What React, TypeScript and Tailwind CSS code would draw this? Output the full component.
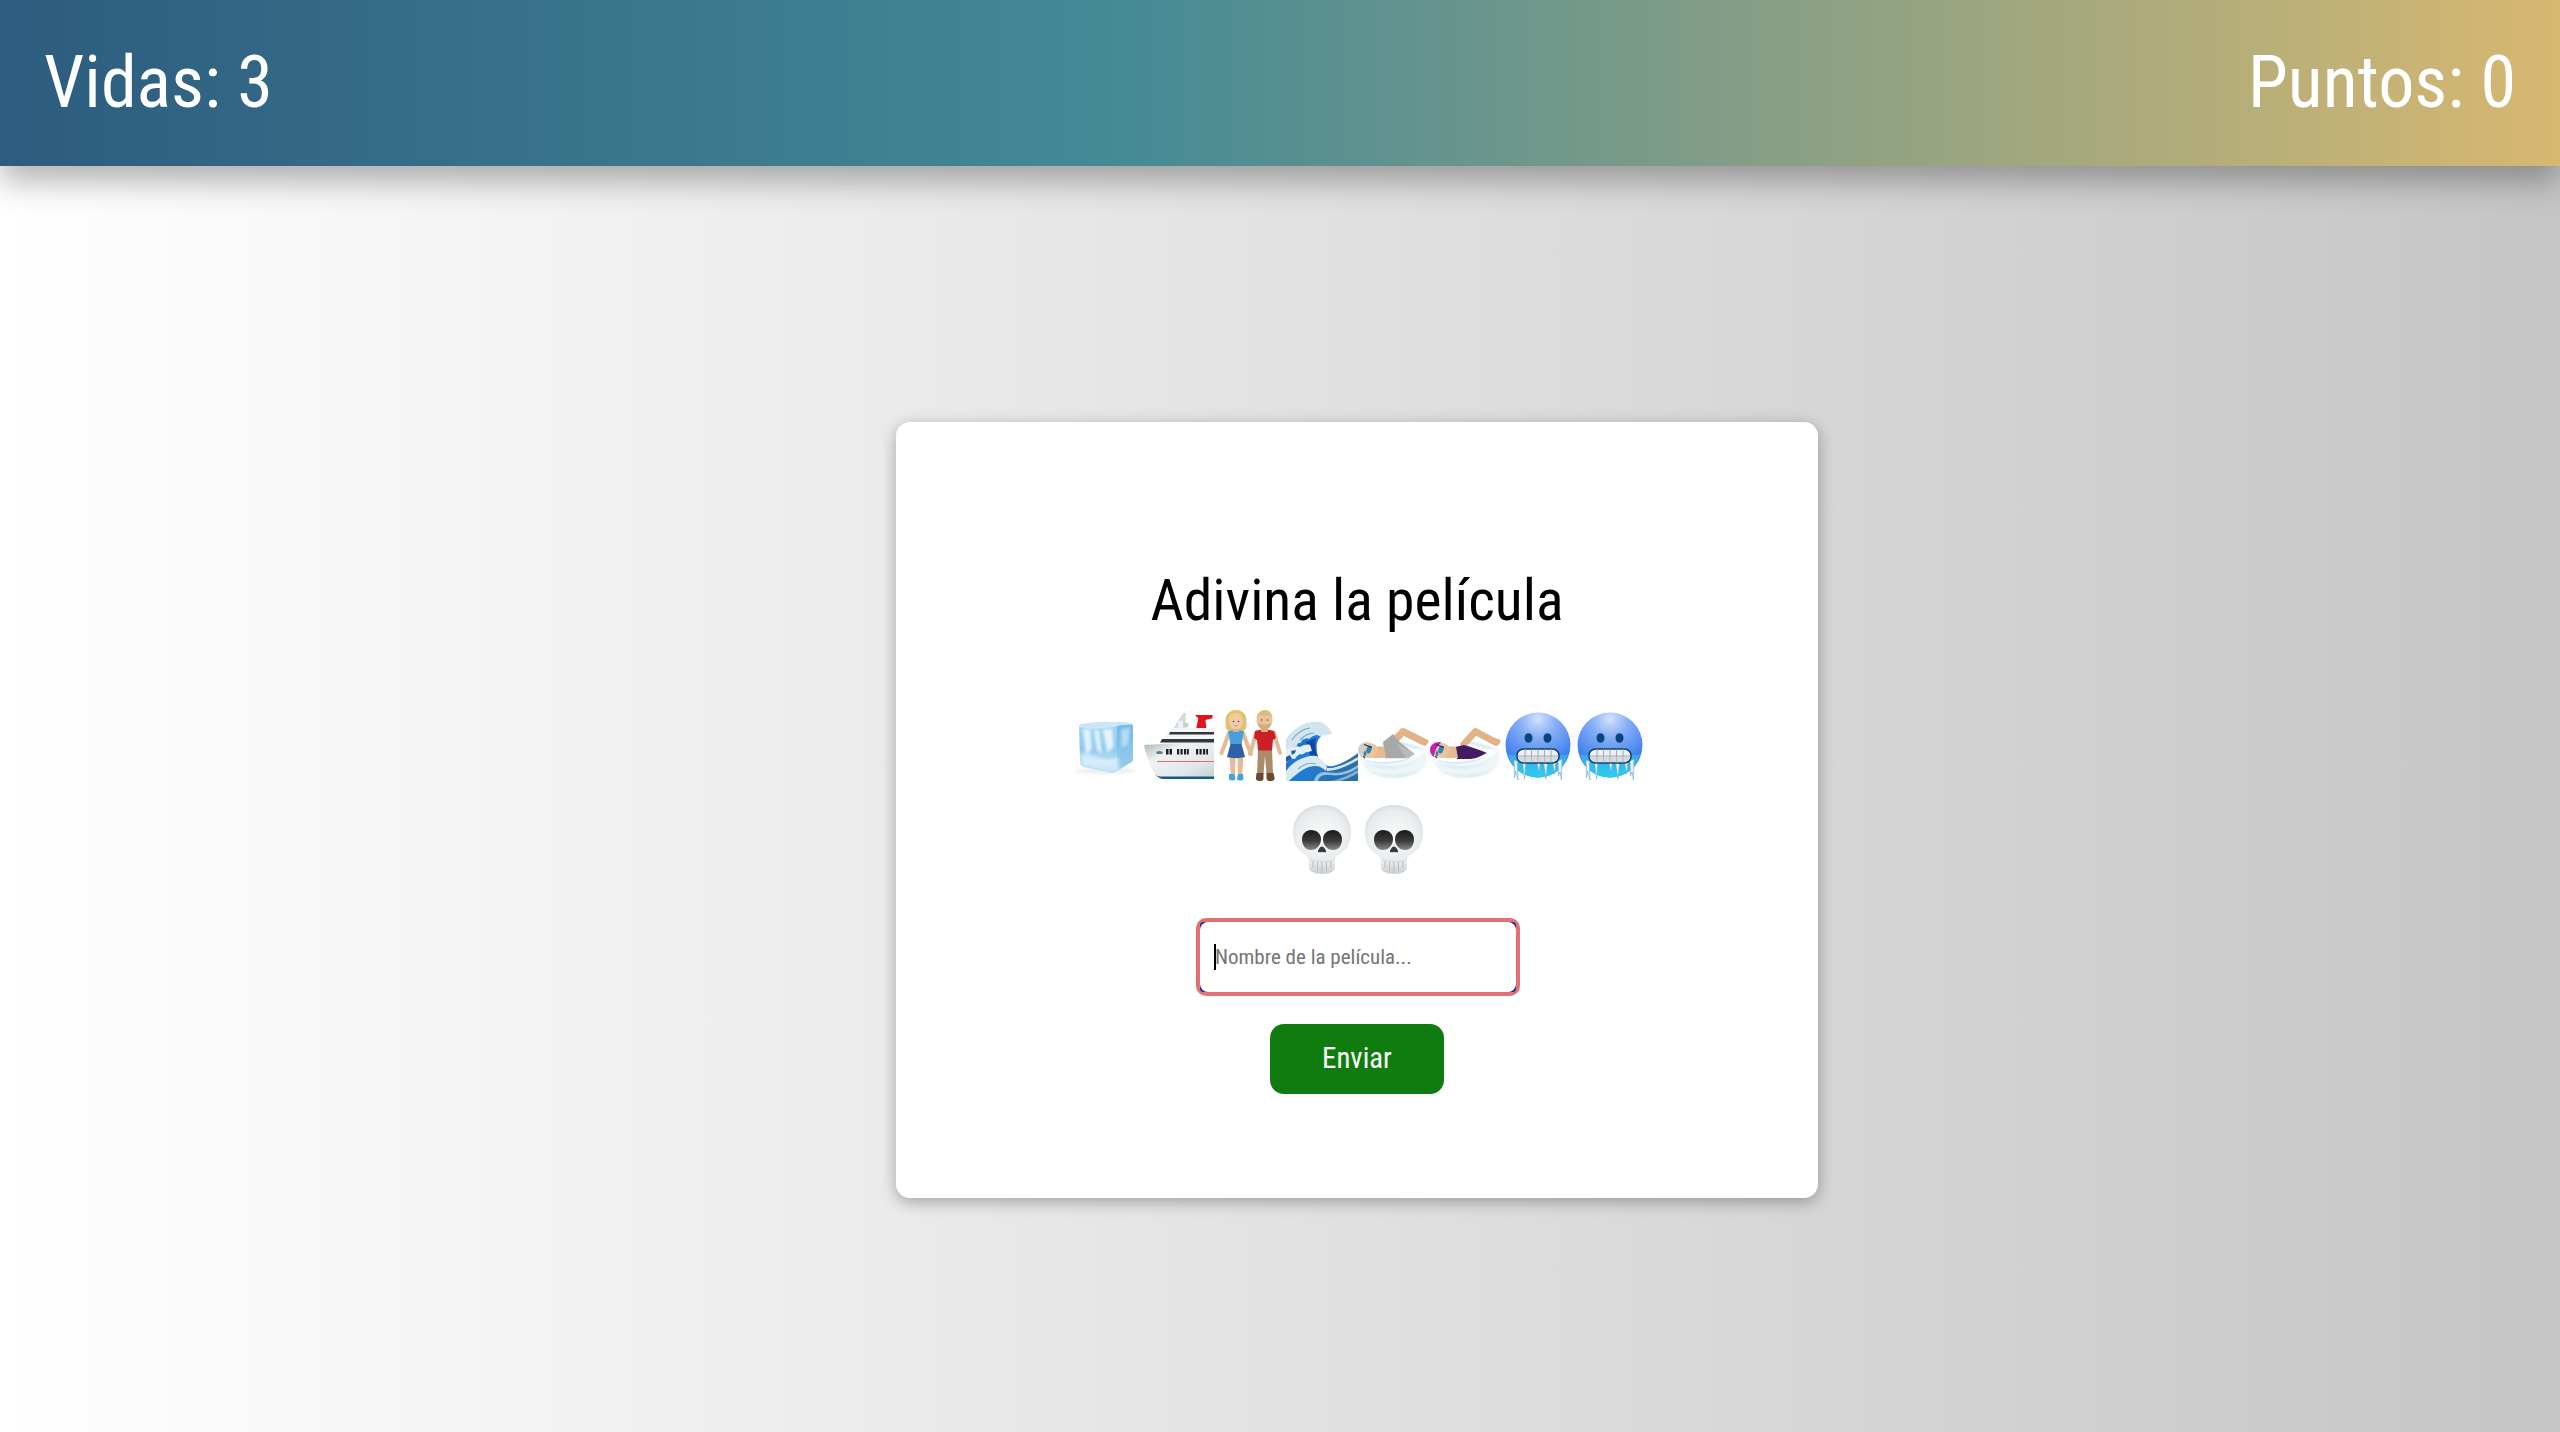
const textFont = "font-['Roboto_Condensed','Roboto',sans-serif] font-stretch-[75%]";

function IceCube() {
  return (
    <svg viewBox="0 0 72 72" className="h-[72px] w-[72px] shrink-0">
      <defs>
        <linearGradient id="iceFace" x1="0" y1="0" x2="0" y2="1">
          <stop offset="0" stopColor="#a9d8f5" />
          <stop offset="0.5" stopColor="#8cc8ee" />
          <stop offset="0.75" stopColor="#b6def6" />
          <stop offset="1" stopColor="#8fcaf0" />
        </linearGradient>
        <linearGradient id="iceSide" x1="0" y1="0" x2="0" y2="1">
          <stop offset="0" stopColor="#74b8e4" />
          <stop offset="1" stopColor="#9dd0f0" />
        </linearGradient>
        <filter id="iceBlur" x="-20%" y="-20%" width="140%" height="140%">
          <feGaussianBlur stdDeviation="1.4" />
        </filter>
        <clipPath id="iceClip">
          <path d="M9 18c0-2 1-3 3-3 14-2 32-3 48-1 2 0 3 2 3 4v31c0 3-1 4-3 5l-15 9c-2 1-5 1-7 0L14 58c-2-1-4-2-4-5z" />
        </clipPath>
      </defs>
      <ellipse cx="36" cy="62" rx="30" ry="3" fill="#e3e8eb" opacity="0.7" filter="url(#iceBlur)" />
      <g clipPath="url(#iceClip)">
        <rect x="8" y="12" width="56" height="54" fill="url(#iceFace)" />
        <path d="M47 16h17v40l-17 9z" fill="url(#iceSide)" />
        <g filter="url(#iceBlur)">
          <path d="M13 20h7l2 20-6 6zM24 21h5l3 24-5-4zM33 20h9l2 18-7 6z" fill="#f1fafe" opacity="0.85" />
          <path d="M51 20l9-1-2 16-6 4z" fill="#c4e5f8" opacity="0.8" />
          <path d="M10 46c8-3 16 2 24 4 5 1 10 0 15-2v14l-10 2-26-7z" fill="#ffffff" opacity="0.45" />
        </g>
        <path d="M9 18c13 3 27 2 38-1 5-1 11-2 16-2l-3-2H12l-3 3z" fill="#c9e7f9" />
      </g>
    </svg>
  );
}

function Ship() {
  return (
    <svg viewBox="0 0 72 72" className="h-[72px] w-[72px] shrink-0">
      <defs>
        <linearGradient id="hull" x1="0" y1="0" x2="1" y2="1">
          <stop offset="0" stopColor="#aab6bb" />
          <stop offset="0.3" stopColor="#eef2f3" />
          <stop offset="0.7" stopColor="#e2e7e9" />
          <stop offset="1" stopColor="#c3ccd0" />
        </linearGradient>
      </defs>
      <path d="M31 20L41 4h3l-1 16z" fill="#d5dadc" />
      <path d="M36 12h5v8h-5z" fill="#eef1f2" />
      <circle cx="44" cy="16" r="2.5" fill="#c9cfd1" />
      <path d="M54 20.5L56.3 9.5 53 6h17.5v3.3l-7 1.700 1 10z" fill="#e0141c" />
      <path d="M30 19h42v16H19l5-9z" fill="#f4f6f7" />
      <path d="M28 23h44v2.500H27z" fill="#33383b" />
      <path d="M20 30h52v3.500H18z" fill="#33383b" />
      <path d="M2 36C14 35 50 34 72 34v36H22C17 70 14 68 12 64 7 55 4 45 2 36z" fill="url(#hull)" />
      <path d="M12.500 65c3 3 6 5 9.500 5h50v-2.500H18c-2 0-4-1-5.500-2.500z" fill="#155b8d" />
      <path d="M15 52.500h57" stroke="#e46a70" strokeWidth="1" />
      <path d="M24 40h2.500v5.500H24zM27.500 40H30v5.500h-2.500zM35 40h2.200v5.500H35zM38.500 40h2.200v5.500h-2.200zM42 40h2.200v5.500H42zM45 40h1.800v5.500H45zM54 40h2.200v5.500H54zM57.500 40h2.200v5.500h-2.200zM61 40h2.200v5.500H61zM64.200 40H66v5.500h-1.800z" fill="#1b1f22" />
      <ellipse cx="17.500" cy="43.500" rx="3.300" ry="1.500" fill="#6e777b" />
    </svg>
  );
}

function Couple() {
  return (
    <svg viewBox="0 0 72 72" className="h-[72px] w-[72px] shrink-0">
      <path d="M15 24L7.500 44M29 24l7.500 20M60 24l6 20M42 24l-5.500 20" stroke="#e3bb94" strokeWidth="4" strokeLinecap="round" fill="none" />
      <path d="M15.500 48h6l-.5 18h-4zM23.500 48h6l-1.500 18h-4z" fill="#e3bb94" />
      <path d="M15 65h5.500l1 5c-1.500 2-5 2-6.500 0zM24 65h5l.5 5c-1.500 2-5 2-6.500 0z" fill="#3ea4e4" />
      <path d="M14 22c5-2 11-2 16 0l-2.500 14H16.500z" fill="#4a9edb" />
      <path d="M16.500 35h11l3.500 13c-6 1.500-13 1.500-18 0z" fill="#2f5fa6" />
      <path d="M11.500 12C11.500 5 16 1 22 1s10.500 4 10.500 11c0 3 0 6-1 8.500-1.500 1-4 1-5 1H17c-1 0-3.500 0-4.500-1-1-2.500-1-5.500-1-8.500z" fill="#e3c070" />
      <rect x="19" y="17" width="6" height="6" fill="#dcb08a" />
      <ellipse cx="22" cy="12.500" rx="7" ry="7.800" fill="#efcbaa" />
      <path d="M15 11c3-1 6-3 8-5.500 1 2.500 3 4.500 5.500 5.500 0-4-2.500-7-6.500-7s-7 3-7 7z" fill="#f0d083" />
      <circle cx="19.500" cy="12.500" r="0.800" fill="#5b4a3c" />
      <circle cx="24.500" cy="12.500" r="0.800" fill="#5b4a3c" />
      <path d="M20.500 16.500c1 .6 2 .6 3 0" stroke="#c2705d" strokeWidth="0.900" fill="none" />
      <path d="M44 40h14l1 25h-6.500L51 47l-1.500 18H43z" fill="#ab8c68" />
      <path d="M42.500 64h7v5.500c0 2-1.500 2.500-3.500 2.500s-4.500-.5-4-3.500zM52.500 64h7l1 4.500c.5 3-2 3.500-4 3.500s-4-.5-4-2.500z" fill="#6b4a33" />
      <path d="M41 22c6-2 13-2 19 0l2 7-3 2-1 10.500H44L43 31l-3-2z" fill="#cb1f27" />
      <rect x="47" y="16" width="7" height="7" fill="#d8ae87" />
      <ellipse cx="50.500" cy="11.500" rx="8" ry="8.500" fill="#e8c39d" />
      <path d="M42.500 10c0-6 4.500-9 8.500-9s7.500 3 7.500 9c-1-1-1.500-3-2.500-4-3 1-8 1-11 0-1 1-1.500 3-2.500 4z" fill="#dcbc78" />
      <path d="M44 14c1.500 2 3.500 1.500 6.500 1.500s5-.5 6.500-1.500c0 4-3 7-6.500 7S44 18 44 14z" fill="#cdaf79" />
      <circle cx="47.500" cy="11" r="0.800" fill="#5b4a3c" />
      <circle cx="53.500" cy="11" r="0.800" fill="#5b4a3c" />
      <circle cx="36.500" cy="44.500" r="2.500" fill="#e3bb94" />
    </svg>
  );
}

function Wave() {
  return (
    <svg viewBox="0 0 72 72" className="h-[72px] w-[72px] shrink-0">
      <defs>
        <linearGradient id="sea" x1="0" y1="0" x2="1" y2="0.6">
          <stop offset="0" stopColor="#1b5fae" />
          <stop offset="0.45" stopColor="#1e7fdc" />
          <stop offset="1" stopColor="#2a6fa8" />
        </linearGradient>
      </defs>
      <path d="M0 32C5 22 17 13 31 13c6 0 11 5 14 12l-7-1c-3 3-6 6-7 10-1 5 0 11 2 16 3 5 8 8 14 7 9-2 17-7 25-13v28H0z" fill="url(#sea)" />
      <path d="M30 29c-1 5-1 12 1 18l-6 2-5-16z" fill="#0f49a0" />
      <path d="M0 32C4 24 12 16 21 14c5-1 11-2 16 0 4 2 7 6 9 11-2 1-4 1-5-1 0 3-3 4-4 1-1 3-4 3-5 1-4 0-7 2-9 4-1-1-3-1-4 0-2 0-4 2-4 4-2-1-4 1-4 3-3 0-5 2-6 4-3 0-6 2-9 4z" fill="#d2e5ee" />
      <path d="M6 31c4-6 11-11 18-12M14 31c4-4 9-7 14-7" stroke="#6fa9cd" strokeWidth="1.200" fill="none" />
      <path d="M0 41c5-3 10-5 14-3 3-2 7-3 10-2l2 6c-3 0-4 2-6 1-2 2-4 3-6 2-2 1-4 3-5 5-3-1-6 1-9 4z" fill="#e4f0f6" />
      <path d="M0 48l4-2 2 4-6 3zM5 42l5-1-1 3-3 2z" fill="#1b5fae" />
      <path d="M0 62c5-7 12-12 20-14 4-1 9-2 12 0 4 3 7 6 9 10 0 2-1 3-1 4-3-3-6-5-11-5-7 0-13 4-18 8-3 2-6 5-8 7H0z" fill="#dbeaf2" />
      <path d="M12 60c6-5 12-7 18-5" stroke="#76aed0" strokeWidth="1.200" fill="none" />
      <path d="M28 72c1-5 5-9 10-9 7 0 12 2 18 0 6-1 11-4 16-7v3c-6 4-11 6-17 7-6 1-11 0-15 0-4 0-7 2-8 6z" fill="#8fc0de" />
      <path d="M41 59c8 1 21-5 31-11v3c-10 6-22 11-31 11z" fill="#cfe3ee" />
      <path d="M46 72c8-2 17-6 26-11v3c-7 4-13 7-19 8z" fill="#7db4d6" />
    </svg>
  );
}

function Swimmer({ cap, suit, idp, female }: { cap: string; suit: string; idp: string; female?: boolean }) {
  return (
    <svg viewBox="0 0 72 72" className="h-[72px] w-[72px] shrink-0">
      <defs>
        <filter id={`${idp}b`} x="-10%" y="-30%" width="120%" height="160%">
          <feGaussianBlur stdDeviation="1" />
        </filter>
      </defs>
      <g filter={`url(#${idp}b)`}>
        <path d="M2 50c16 6 34 6 50 1 7-2 13-6 17-11 2 10-2 19-8 24-14 6-36 6-50-1-4-3-7-8-9-13z" fill="#edf5f9" />
        <path d="M8 55c14 4 34 4 50-2-12 7-36 8-50 2zM12 63c14 5 32 5 48-1-12 8-36 8-48 1z" fill="#c6e0ec" />
        <path d="M38 32c10 2 20 5 31 9-10 0-22-4-31-7z" fill="#cfe5ef" />
      </g>
      <path
        d={female ? "M34 35L45.500 22.500 65 33" : "M37 31L45 22.500 65 32.500"}
        stroke="#e3b286"
        strokeWidth="7"
        strokeLinejoin="round"
        strokeLinecap="round"
        fill="none"
      />
      <path d="M64 29.500c3 0 6 .5 6.500 2 .2 2-2 5.500-4.500 5.500z" fill="#e3b286" />
      {female ? (
        <path d="M25 38l9-2c8 2 16 5 23 8-6 3-12 6-17 6H27z" fill={suit} />
      ) : (
        <>
          <path d="M25 33l10-8 6.700 8 15 12-6.700 4.300H26.700z" fill={suit} />
          <path d="M38 34l10 15h2l6.700-4.300z" fill="#c6c6c6" opacity="0.6" />
        </>
      )}
      <path d="M16 38c4-1 7-1 10 0l2 11H14z" fill="#e6bb92" />
      <ellipse cx="11.500" cy="41.500" rx="8.500" ry="7.500" fill="#ebc49c" />
      <path d="M9.500 33C4 33 0 36.500 0 41c0 3 1.500 5.500 4 7 .5-5 2.500-11 7.500-14.500z" fill={cap} />
      <ellipse cx="11" cy="40.500" rx="2.500" ry="4" fill="#2c83c3" transform="rotate(20 11 40.500)" />
      <ellipse cx="7" cy="44.500" rx="1.400" ry="2.600" fill="#2c83c3" />
      <path d="M6 35.500l8 3M5 47l2 2" stroke="#2d2d2d" strokeWidth="1.200" />
      <path d="M2 49c10 4 24 5 36 3 8-1 14-3 20-5-8 4-14 6-22 7-12 2-24 0-34-5z" fill="#d5e8f1" />
    </svg>
  );
}

function ColdFace({ idp }: { idp: string }) {
  return (
    <svg viewBox="0 0 72 72" className="h-[72px] w-[72px] shrink-0">
      <defs>
        <radialGradient id={idp} cx="0.5" cy="0.1" r="0.95">
          <stop offset="0" stopColor="#d2e2fc" />
          <stop offset="0.3" stopColor="#86aff6" />
          <stop offset="0.7" stopColor="#4683ee" />
          <stop offset="1" stopColor="#2a62dc" />
        </radialGradient>
        <linearGradient id={`${idp}c`} x1="0" y1="0" x2="0" y2="1">
          <stop offset="0" stopColor="#3aa8ec" />
          <stop offset="1" stopColor="#28d0f0" />
        </linearGradient>
      </defs>
      <circle cx="36" cy="36" r="32.500" fill={`url(#${idp})`} />
      <path d="M6 46h60c-4 14-16 22.500-30 22.500S10 60 6 46z" fill={`url(#${idp}c)`} />
      <ellipse cx="26.500" cy="29" rx="4" ry="4.800" fill="#07457f" />
      <ellipse cx="45.500" cy="29" rx="4" ry="4.800" fill="#07457f" />
      <path d="M12 51l3.500 1 .5 19-2.500-9-1 7zM20.500 53l3.500 0-1.500 17zM35 53h3.500l-1.500 11zM41.500 53h4l-1.500 17zM50.500 53h3.500l-1.500 12zM56 52l4-2-.5 21-1.500-8-1.500 4z" fill="#e4f3fa" stroke="#6aa6cf" strokeWidth="0.600" />
      <rect x="15" y="40" width="42" height="14" rx="6.500" fill="#eef1f3" stroke="#10406f" strokeWidth="1.500" />
      <path d="M15.500 47h41M23 40v14M29.500 40v14M36 40v14M42.500 40v14M49 40v14" stroke="#8f9aa1" strokeWidth="0.800" />
      <path d="M16 47h40c0 3.500-3 6-6 6H22c-3 0-6-2.500-6-6z" fill="#bcc5ca" opacity="0.5" />
    </svg>
  );
}

function Skull({ idp }: { idp: string }) {
  return (
    <svg viewBox="0 0 72 72" className="h-[72px] w-[72px] shrink-0">
      <defs>
        <radialGradient id={`${idp}b`} cx="0.5" cy="0.55" r="0.65">
          <stop offset="0" stopColor="#fafbfb" />
          <stop offset="0.7" stopColor="#e9ecee" />
          <stop offset="1" stopColor="#c8ced1" />
        </radialGradient>
        <linearGradient id={`${idp}s`} x1="0" y1="0" x2="0" y2="1">
          <stop offset="0" stopColor="#1a1a1a" />
          <stop offset="0.55" stopColor="#3c3c3c" />
          <stop offset="1" stopColor="#8a8a8a" />
        </linearGradient>
        <linearGradient id={`${idp}j`} x1="0" y1="0" x2="0" y2="1">
          <stop offset="0" stopColor="#f6f7f7" />
          <stop offset="1" stopColor="#c9ced1" />
        </linearGradient>
      </defs>
      <path d="M23 54h26v10c0 4-4 7-13 7s-13-3-13-7z" fill={`url(#${idp}j)`} />
      <path d="M36 2C18 2 7 14 7 29c0 10 4 18 11 22 2 1 4 3 5 6 8 2 18 2 26 0 1-3 3-5 5-6 7-4 11-12 11-22C65 14 54 2 36 2z" fill={`url(#${idp}b)`} />
      <path d="M16 36c0-5 4-9 9-9 6 0 10 4 10 9 0 6-4 11-10 11-6 0-9-5-9-11z" fill={`url(#${idp}s)`} />
      <path d="M56 36c0-5-4-9-9-9-6 0-10 4-10 9 0 6 4 11 10 11 6 0 9-5 9-11z" fill={`url(#${idp}s)`} />
      <path d="M36 43.500c2 0 4 3.500 4 5 0 1.500-2 .5-4 .5s-4 1-4-.5c0-1.500 2-5 4-5z" fill="#3a3a3a" />
      <path d="M27 58v7M31.500 58.500v9M36 58.500v10M40.500 58.500v9M45 58v7" stroke="#b4babd" strokeWidth="0.900" />
      <path d="M24 57c8 2 16 2 24 0" stroke="#cfd3d6" strokeWidth="0.800" fill="none" />
    </svg>
  );
}

export default function App() {
  return (
    <div className={`flex h-[1432px] flex-col overflow-hidden bg-[linear-gradient(90deg,#ffffff,#c5c5c5)] ${textFont}`}>
      <header className="z-10 flex h-[166px] shrink-0 items-center justify-between bg-[linear-gradient(90deg,#2c5c7f,#468a96_44%,#d7b871)] px-[44px] text-[72px] text-white shadow-[0_15px_30px_rgba(0,0,0,0.3)]">
        <span>Vidas: 3</span>
        <span>Puntos: 0</span>
      </header>

      <main className="flex justify-center pt-[256px] pl-[154px]">
        <section className="flex h-[776px] w-[922px] flex-col items-center rounded-[14px] bg-white pt-[144px] shadow-[0_4px_16px_rgba(0,0,0,0.3)]">
          <h1 className="h-[70px] text-[57.6px] leading-[70px] text-black">Adivina la película</h1>

          <div className="mt-[73px] ml-[2px] flex w-[576px] flex-wrap justify-center gap-y-[22px]">
            <IceCube />
            <Ship />
            <Couple />
            <Wave />
            <Swimmer cap="#cfcfcf" suit="#a8a8a8" idp="waterA" />
            <Swimmer cap="#c422ae" suit="#431c63" idp="waterB" female />
            <ColdFace idp="coldA" />
            <ColdFace idp="coldB" />
            <Skull idp="skullA" />
            <Skull idp="skullB" />
          </div>

          <div className="relative mt-[43px] ml-[2px] rounded-[10px] bg-[#e27076] p-[4px]">
            <div className="rounded-[4px] bg-[#1c1c8c]">
              <input
                type="text"
                placeholder="Nombre de la película..."
                className="block h-[70px] w-[316px] rounded-[8px] bg-white px-[15px] text-[21px] outline-none placeholder:text-[#757575]"
              />
            </div>
            <span className="absolute top-[26px] left-[18px] h-[26px] w-[2px] bg-black" />
          </div>

          <button className="mt-[28px] h-[70px] w-[174px] rounded-[14px] bg-[#107c10] text-[28.8px] text-white">Enviar</button>
        </section>
      </main>
    </div>
  );
}
